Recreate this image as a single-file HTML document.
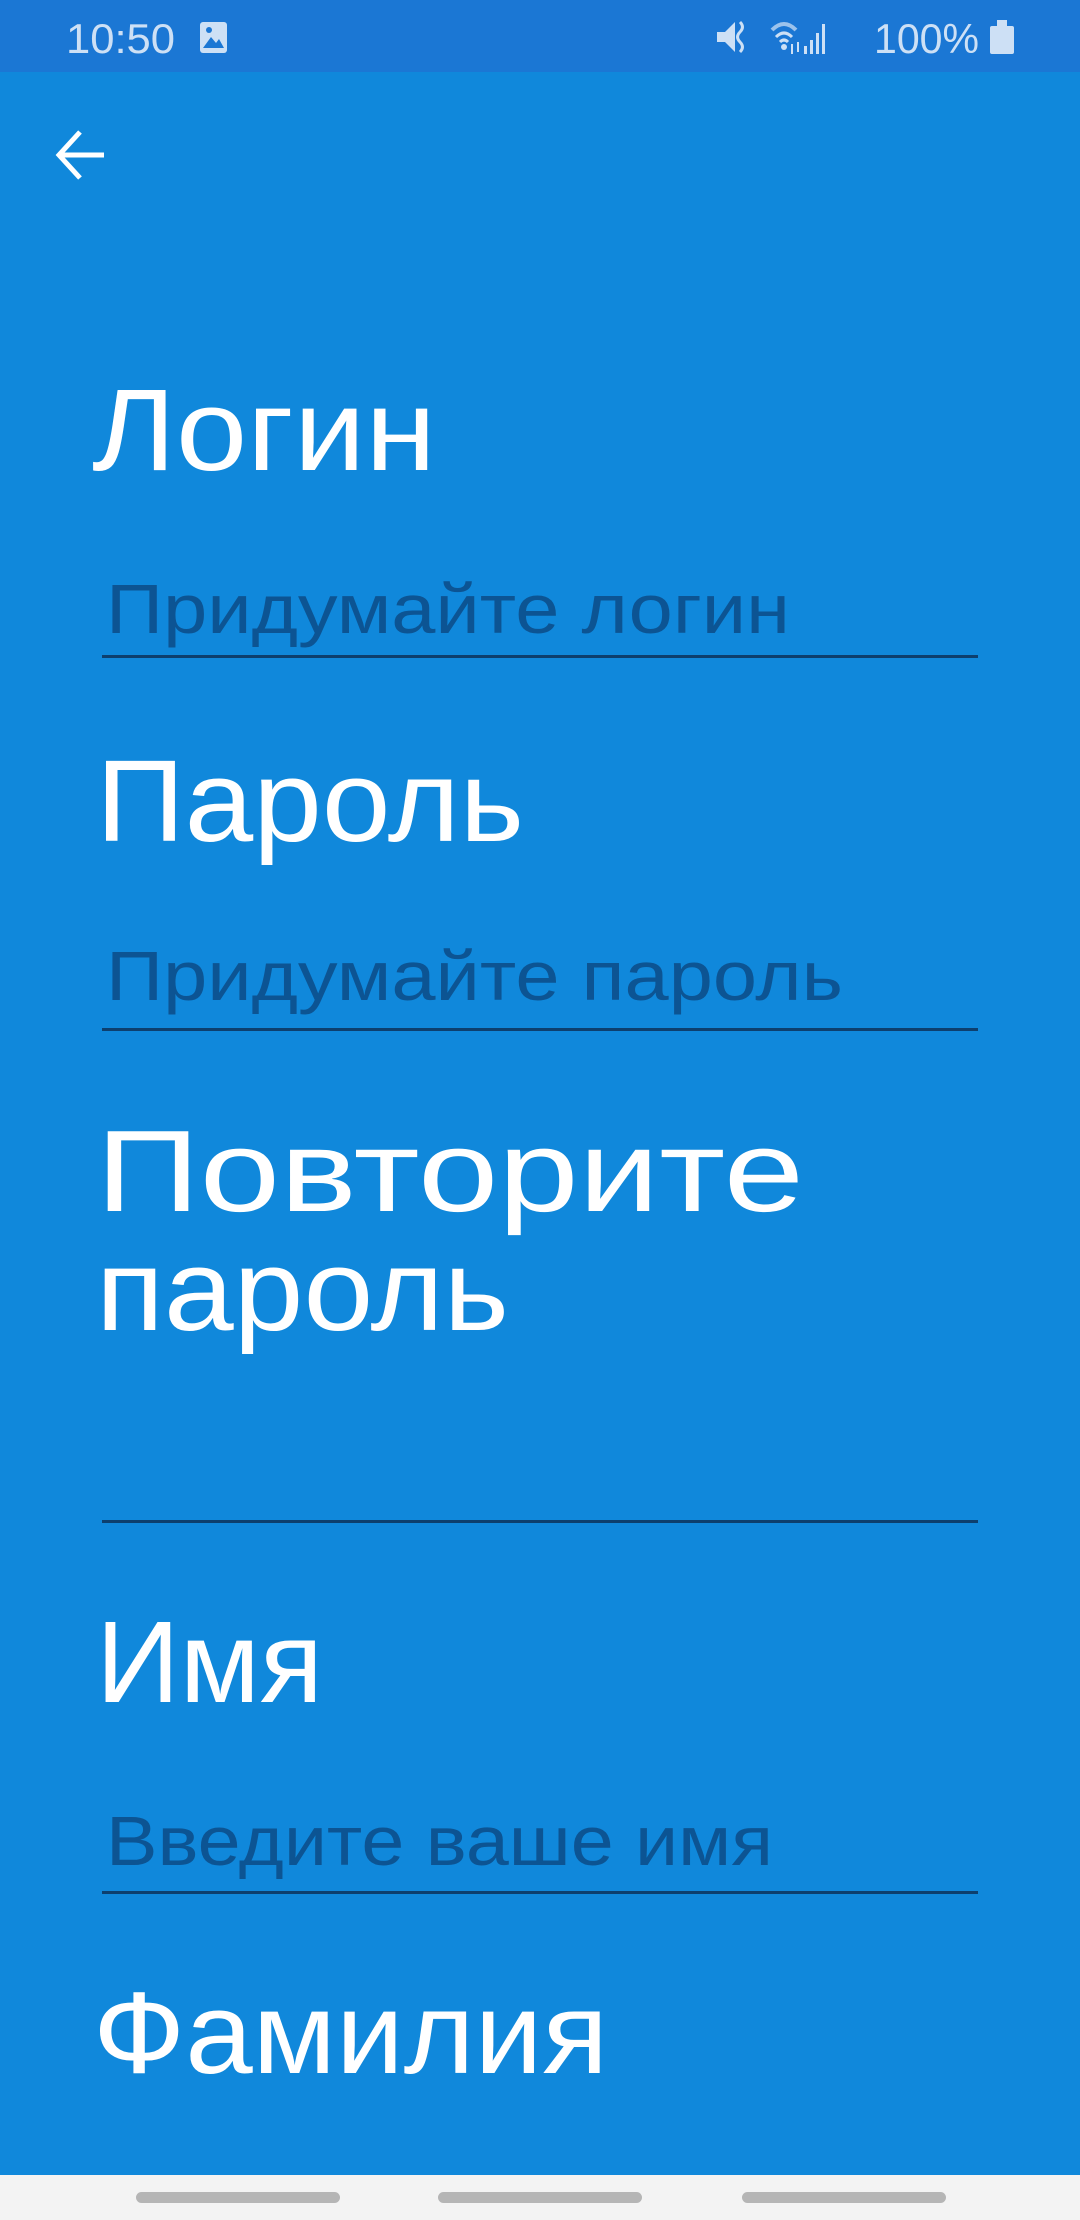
<!DOCTYPE html>
<html><head><meta charset="utf-8"><style>
html,body{margin:0;padding:0;width:1080px;height:2220px;overflow:hidden;background:#1088db}
svg{display:block}
</style></head><body>
<svg width="1080" height="2220" viewBox="0 0 1080 2220" xmlns="http://www.w3.org/2000/svg" font-family="Liberation Sans, sans-serif">
<rect x="0" y="0" width="1080" height="2220" fill="#1088db"/>
<rect x="0" y="0" width="1080" height="72" fill="#1b77d4"/>
<text x="66" y="53" font-size="42" fill="#cde0f5" textLength="109" lengthAdjust="spacingAndGlyphs">10:50</text>
<rect x="200" y="22" width="27" height="31" rx="3" fill="#cde0f5"/>
<path d="M203 48 L211 37 L216 43 L219 39 L224 48 Z" fill="#1b77d4"/>
<circle cx="209" cy="30" r="3" fill="#1b77d4"/>
<path d="M717 32 h8 l10 -10 v30 l-10 -10 h-8 z" fill="#cde0f5"/>
<path d="M740 22 q5 5 0 10 q-5 5 0 10 q5 5 0 10" stroke="#cde0f5" stroke-width="3" fill="none"/>
<path d="M772 30 q12 -12 24 0" stroke="#9cc3ec" stroke-width="4" fill="none"/>
<path d="M776 37 q8 -8 16 0 M780 42 q4 -4 8 0" stroke="#cde0f5" stroke-width="3" fill="none"/>
<circle cx="784" cy="47" r="3" fill="#cde0f5"/>
<path d="M792 44 v10 M798 42 v10" stroke="#cde0f5" stroke-width="2"/>
<rect x="804" y="46" width="3" height="8" fill="#cde0f5"/>
<rect x="810" y="40" width="3" height="14" fill="#cde0f5"/>
<rect x="816" y="33" width="3" height="21" fill="#cde0f5"/>
<rect x="822" y="24" width="3" height="30" fill="#cde0f5"/>
<text x="874" y="53" font-size="42" fill="#cde0f5" textLength="105" lengthAdjust="spacingAndGlyphs">100%</text>
<rect x="990" y="26" width="24" height="28" rx="2" fill="#cde0f5"/>
<rect x="997" y="20" width="10" height="7" fill="#cde0f5"/>
<path d="M104 155 H60 M80 132 L59 155 L80 178" stroke="#fff" stroke-width="5" fill="none"/>
<g fill="#ffffff" font-size="116">
<text x="92" y="470" textLength="344" lengthAdjust="spacingAndGlyphs">Логин</text>
<text x="96" y="841" textLength="428" lengthAdjust="spacingAndGlyphs">Пароль</text>
<text x="96" y="1211" textLength="708" lengthAdjust="spacingAndGlyphs">Повторите</text>
<text x="96" y="1330" textLength="413" lengthAdjust="spacingAndGlyphs">пароль</text>
<text x="96" y="1702" textLength="227" lengthAdjust="spacingAndGlyphs">Имя</text>
<text x="93" y="2073" textLength="515" lengthAdjust="spacingAndGlyphs">Фамилия</text>
</g>
<g fill="#0c5493" font-size="70">
<text x="106" y="633" textLength="684" lengthAdjust="spacingAndGlyphs">Придумайте логин</text>
<text x="106" y="1000" textLength="737" lengthAdjust="spacingAndGlyphs">Придумайте пароль</text>
<text x="106" y="1865" textLength="667" lengthAdjust="spacingAndGlyphs">Введите ваше имя</text>
</g>
<g fill="#0d3f6e">
<rect x="102" y="655" width="876" height="3"/>
<rect x="102" y="1028" width="876" height="3"/>
<rect x="102" y="1520" width="876" height="3"/>
<rect x="102" y="1891" width="876" height="3"/>
</g>
<rect x="0" y="2175" width="1080" height="45" fill="#f3f3f3"/>
<rect x="136" y="2192" width="204" height="11" rx="5.5" fill="#b5b5b5"/>
<rect x="438" y="2192" width="204" height="11" rx="5.5" fill="#b5b5b5"/>
<rect x="742" y="2192" width="204" height="11" rx="5.5" fill="#b5b5b5"/>
</svg>
</body></html>
